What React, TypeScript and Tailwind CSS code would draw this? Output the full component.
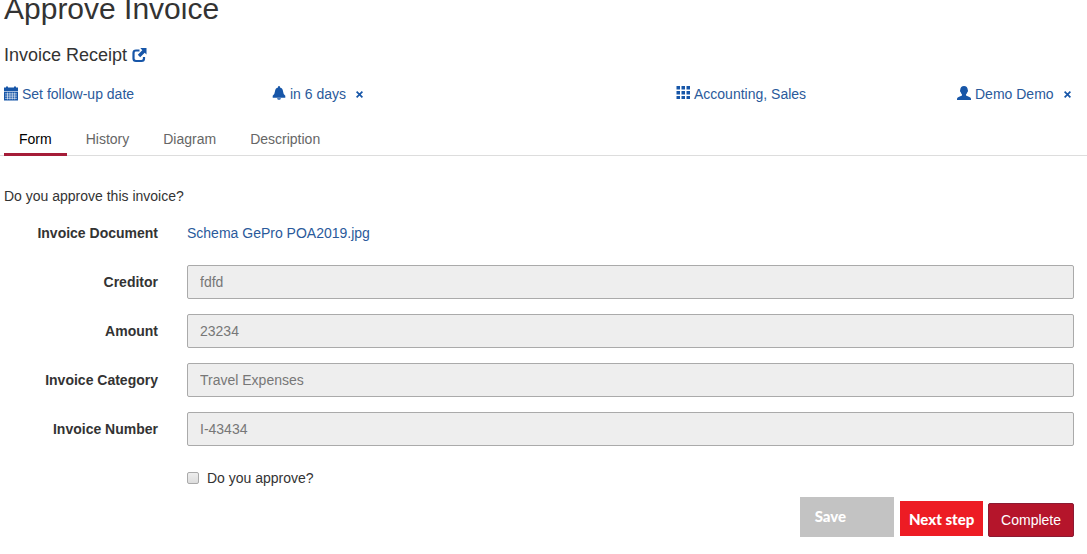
import type { ReactNode } from "react";

const NewWindowIcon = () => (
  <svg viewBox="0 0 15 15" className="size-[15px]" fill="none" aria-hidden="true">
    <path d="M7.500 2.500H4Q1.500 2.500 1.500 5v5.500Q1.500 13 4 13h5.500q2.500 0 2.500-2.500V9" stroke="#1756a8" strokeWidth="2.200" />
    <path d="M8.300 0H14.500V6.500l-1.800-1.800-4.500 4.500L5.800 6.800l4.500-4.500z" fill="#1756a8" />
  </svg>
);

const CalendarIcon = () => (
  <svg viewBox="0 0 14 15" className="-mt-0.5 h-[15px] w-3.5" fill="#1756a8" aria-hidden="true">
    <path d="M0 1.500h2V.5h2v1h6v-1h2v1h2V5H0z" />
    <path d="M0 5.600h14V14.500H0z" />
    <path
      d="M1 7.900h12M1 10.100h12M1 12.300h12M3.500 6.500v7M5.900 6.500v7M8.300 6.500v7M10.700 6.500v7"
      stroke="#fff"
      strokeWidth=".6"
    />
  </svg>
);

const BellIcon = () => (
  <svg viewBox="0 0 14 14" className="-mt-0.5 size-3.5" fill="#1756a8" aria-hidden="true">
    <path d="M7 0q1 0 1 1v.4q2.800.7 3 3.800.2 3 2.300 4.600V11H.7V9.800Q2.800 8.200 3 5.200q.2-3.100 3-3.800V1q0-1 1-1zM.7 11h12.600v.7H.7zM5 12.200h4Q8.600 13.800 7 13.800T5 12.200z" />
  </svg>
);

const GridIcon = () => (
  <svg viewBox="0 0 14 14" className="-mt-0.5 size-3.5" fill="#1756a8" aria-hidden="true">
    <path d="M.5 0H4v3.500H.5zM5.500 0H9v3.500H5.500zM10.500 0H14v3.500h-3.500zM.5 5H4v3.500H.5zM5.500 5H9v3.500H5.500zM10.500 5H14v3.500h-3.500zM.5 10H4v3H.5zM5.500 10H9v3H5.500zM10.500 10H14v3h-3.500z" />
  </svg>
);

const UserIcon = () => (
  <svg viewBox="0 0 14 14" className="-mt-0.5 size-3.5" fill="#1756a8" aria-hidden="true">
    <path d="M7 0c2.300 0 3.700 1.500 3.700 3.600 0 .5.300.7.300 1.300 0 .7-.4 1-.7 1.300-.3 1-.7 1.700-1.300 2.200v1.100l3.400 1.400q1.500.6 1.600 1.900V14H0v-1.200q.1-1.300 1.600-1.900L5 9.500V8.400c-.6-.5-1-1.200-1.300-2.200-.3-.3-.7-.6-.7-1.300 0-.6.300-.8.300-1.300C3.300 1.500 4.700 0 7 0z" />
  </svg>
);

const CloseIcon = () => (
  <svg viewBox="0 0 7 7" className="size-[7px]" stroke="#1756a8" strokeWidth="1.700" aria-hidden="true">
    <path d="M.6.6l5.800 5.800M6.400.6L.6 6.400" />
  </svg>
);

function MetaItem({ icon, text, clearLabel }: { icon: ReactNode; text: string; clearLabel?: string }) {
  return (
    <div className="flex items-center whitespace-nowrap">
      <a href="#" className="flex items-center gap-1 text-[#2a5a9b]">
        {icon}
        {text}
      </a>
      {clearLabel && (
        <button type="button" aria-label={clearLabel} className="ml-[7px] p-[3px]">
          <CloseIcon />
        </button>
      )}
    </div>
  );
}

const tabs = ["Form", "History", "Diagram", "Description"];

const fields = [
  { id: "creditor", label: "Creditor", value: "fdfd" },
  { id: "amount", label: "Amount", value: "23234" },
  { id: "category", label: "Invoice Category", value: "Travel Expenses" },
  { id: "number", label: "Invoice Number", value: "I-43434" },
];

export default function App() {
  return (
    <main className="bg-white font-['Liberation_Sans',Arial,sans-serif] text-sm leading-5 text-[#333]">
      <header className="pl-1">
        <h1 className="text-3xl leading-[18px]">Approve Invoice</h1>
        <h2 className="mt-[27px] flex items-center gap-[5px] text-lg leading-5">
          Invoice Receipt
          <a href="#" aria-label="Open process instance">
            <NewWindowIcon />
          </a>
        </h2>
        <div className="mt-[19px] grid grid-cols-[268fr_404fr_281fr_130fr]">
          <MetaItem icon={<CalendarIcon />} text="Set follow-up date" />
          <MetaItem icon={<BellIcon />} text="in 6 days" clearLabel="Remove due date" />
          <MetaItem icon={<GridIcon />} text="Accounting, Sales" />
          <MetaItem icon={<UserIcon />} text="Demo Demo" clearLabel="Unclaim task" />
        </div>
      </header>

      <nav className="mt-5 flex gap-1 border-b border-[#ddd] pl-1">
        {tabs.map((tab, i) => (
          <a
            key={tab}
            href="#"
            className={
              i === 0
                ? "-mb-px border-b-3 border-[#a51c38] px-[15px] pt-[5px] pb-1 text-black"
                : "-mb-px border-b-3 border-transparent px-[15px] pt-[5px] pb-1 text-[#666]"
            }
          >
            {tab}
          </a>
        ))}
      </nav>

      <form className="mt-[30px] pr-[13px] pl-1">
        <p>Do you approve this invoice?</p>
        <div className="mt-[17px] grid grid-cols-[154px_1fr] gap-x-[29px]">
          <span className="text-right font-bold">Invoice Document</span>
          <a href="#" className="text-[#2a5a9b]">
            Schema GePro POA2019.jpg
          </a>
        </div>
        <div className="mt-[22px] flex flex-col gap-[15px]">
          {fields.map((f) => (
            <div key={f.id} className="grid grid-cols-[154px_1fr] items-center gap-x-[29px]">
              <label htmlFor={f.id} className="text-right font-bold">
                {f.label}
              </label>
              <input
                id={f.id}
                type="text"
                readOnly
                defaultValue={f.value}
                className="h-[34px] w-full rounded-[2px] border border-[#aaa] bg-[#eee] px-3 text-[#777]"
              />
            </div>
          ))}
        </div>
        <label className="mt-[22px] ml-[183px] flex items-center gap-2">
          <input
            type="checkbox"
            className="size-3 appearance-none rounded-[2px] border border-[#aaa] bg-linear-to-b from-[#eee] to-[#ddd] checked:bg-[#1756a8]"
          />
          Do you approve?
        </label>
        <div className="mt-[9px] flex items-start justify-end">
          <button
            type="button"
            className="mr-1.5 h-10 bg-[#c3c3c3] pr-12 pb-0.5 pl-[15px] text-left font-['Lato',sans-serif] text-[15px] font-black text-white"
          >
            Save
          </button>
          <button
            type="button"
            className="mt-1 mr-[5px] h-[35px] w-[83px] bg-[#ed1c24] font-['Lato',sans-serif] text-[15px] font-black text-white"
          >
            Next step
          </button>
          <button
            type="submit"
            className="mt-1.5 h-[34px] rounded-[2px] border border-[#8c1a33] bg-[#b5152b] px-3 text-white"
          >
            Complete
          </button>
        </div>
      </form>
    </main>
  );
}
